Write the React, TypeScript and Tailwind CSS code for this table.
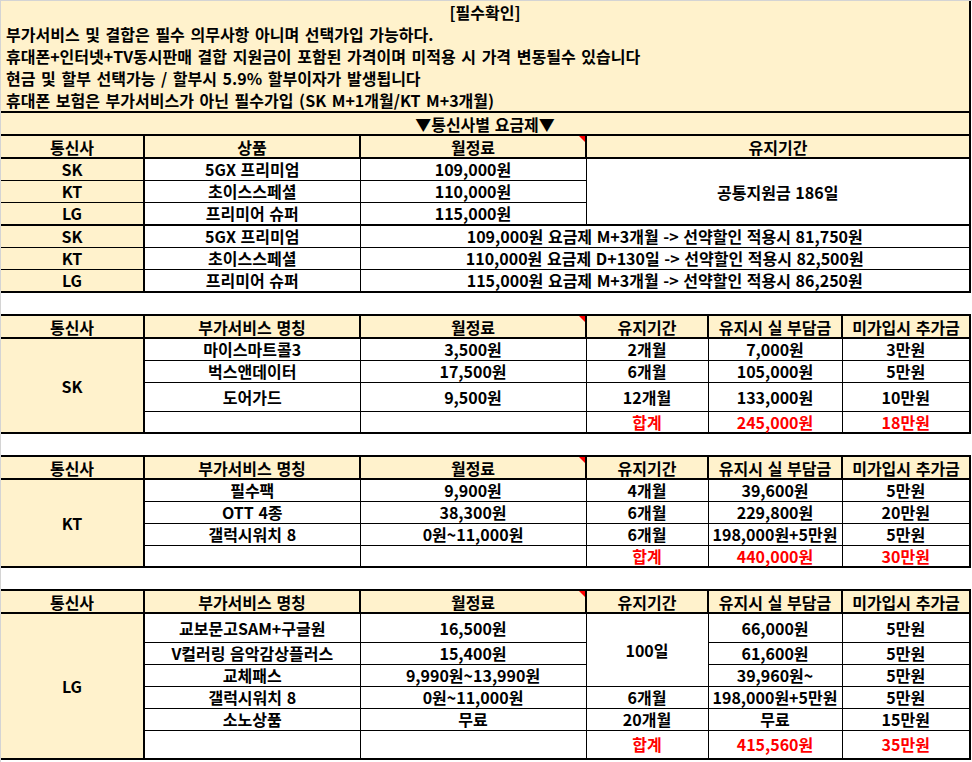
import React from "react";

const FONT = { fontFamily: '"Noto Sans CJK KR", "Noto Sans", sans-serif' };

const HEAD = "relative border-2 border-black bg-[#fff2cc] p-0 text-center font-bold";
const CELL = "border border-black p-0 text-center font-bold";
const CARRIER = "border border-r-2 border-l-0 border-black bg-[#fff2cc] p-0 text-center font-bold";

function Corner() {
  return (
    <span className="absolute right-0 top-0 h-0 w-0 border-l-[6px] border-t-[6px] border-l-transparent border-t-[#ff0000]" />
  );
}

function Cols() {
  return (
    <colgroup>
      <col className="w-[143px]" />
      <col className="w-[216px]" />
      <col className="w-[226px]" />
      <col className="w-[122px]" />
      <col className="w-[134px]" />
      <col className="w-[128px]" />
    </colgroup>
  );
}

type Row = {
  name: string;
  fee: string;
  period: string | null;
  span?: number;
  real: string;
  extra: string;
  h: string;
};

type Addon = {
  carrier: string;
  rows: Row[];
  total: { real: string; extra: string; h: string };
};

const ADDONS: Addon[] = [
  {
    carrier: "SK",
    rows: [
      { name: "마이스마트콜3", fee: "3,500원", period: "2개월", real: "7,000원", extra: "3만원", h: "h-[22px]" },
      { name: "벅스앤데이터", fee: "17,500원", period: "6개월", real: "105,000원", extra: "5만원", h: "h-[22px]" },
      { name: "도어가드", fee: "9,500원", period: "12개월", real: "133,000원", extra: "10만원", h: "h-[29px]" },
    ],
    total: { real: "245,000원", extra: "18만원", h: "h-[22px]" },
  },
  {
    carrier: "KT",
    rows: [
      { name: "필수팩", fee: "9,900원", period: "4개월", real: "39,600원", extra: "5만원", h: "h-[22px]" },
      { name: "OTT 4종", fee: "38,300원", period: "6개월", real: "229,800원", extra: "20만원", h: "h-[22px]" },
      { name: "갤럭시워치 8", fee: "0원~11,000원", period: "6개월", real: "198,000원+5만원", extra: "5만원", h: "h-[22px]" },
    ],
    total: { real: "440,000원", extra: "30만원", h: "h-[22px]" },
  },
  {
    carrier: "LG",
    rows: [
      { name: "교보문고SAM+구글원", fee: "16,500원", period: "100일", span: 3, real: "66,000원", extra: "5만원", h: "h-[29px]" },
      { name: "V컬러링 음악감상플러스", fee: "15,400원", period: null, real: "61,600원", extra: "5만원", h: "h-[22px]" },
      { name: "교체패스", fee: "9,990원~13,990원", period: null, real: "39,960원~", extra: "5만원", h: "h-[22px]" },
      { name: "갤럭시워치 8", fee: "0원~11,000원", period: "6개월", real: "198,000원+5만원", extra: "5만원", h: "h-[22px]" },
      { name: "소노상품", fee: "무료", period: "20개월", real: "무료", extra: "15만원", h: "h-[22px]" },
    ],
    total: { real: "415,560원", extra: "35만원", h: "h-[29px]" },
  },
];

const PLANS = [
  { carrier: "SK", name: "5GX 프리미엄", fee: "109,000원" },
  { carrier: "KT", name: "초이스스페셜", fee: "110,000원" },
  { carrier: "LG", name: "프리미어 슈퍼", fee: "115,000원" },
];

const DISCOUNTS = [
  { carrier: "SK", name: "5GX 프리미엄", text: "109,000원 요금제 M+3개월 -> 선약할인 적용시 81,750원" },
  { carrier: "KT", name: "초이스스페셜", text: "110,000원 요금제 D+130일 -> 선약할인 적용시 82,500원" },
  { carrier: "LG", name: "프리미어 슈퍼", text: "115,000원 요금제 M+3개월 -> 선약할인 적용시 86,250원" },
];

const NOTICE = [
  "부가서비스 및 결합은 필수 의무사항 아니며 선택가입 가능하다.",
  "휴대폰+인터넷+TV동시판매 결합 지원금이 포함된 가격이며 미적용 시 가격 변동될수 있습니다",
  "현금 및 할부 선택가능 / 할부시 5.9% 할부이자가 발생됩니다",
  "휴대폰 보험은 부가서비스가 아닌 필수가입 (SK M+1개월/KT M+3개월)",
];

function PlanTable() {
  return (
    <table className="w-[969px] table-fixed border-collapse">
      <Cols />
      <tbody>
        <tr className="h-[110px]">
          <td colSpan={6} className="border-b-2 border-r-2 border-black bg-[#fff2cc] p-0 align-top font-bold">
            <div className="h-[22px] text-center leading-[22px]">[필수확인]</div>
            {NOTICE.map((line) => (
              <div key={line} className="h-[22px] whitespace-nowrap pl-[5px] leading-[22px] [word-spacing:2px]">
                {line}
              </div>
            ))}
          </td>
        </tr>
        <tr className="h-[23px]">
          <td colSpan={6} className="border-2 border-l-0 border-black bg-[#fff2cc] p-0 text-center font-bold">
            ▼통신사별 요금제▼
          </td>
        </tr>
        <tr className="h-[23px]">
          <td className={`${HEAD} border-l-0`}>통신사</td>
          <td className={HEAD}>상품</td>
          <td className={HEAD}>
            월정료
            <Corner />
          </td>
          <td colSpan={3} className={HEAD}>
            유지기간
          </td>
        </tr>
        {PLANS.map((p, i) => (
          <tr key={p.carrier} className={i === 2 ? "h-[23px]" : "h-[22px]"}>
            <td className={`${CARRIER} ${i === 2 ? "border-b-2" : ""}`}>{p.carrier}</td>
            <td className={`${CELL} ${i === 2 ? "border-b-2" : ""}`}>{p.name}</td>
            <td className={`${CELL} ${i === 2 ? "border-b-2" : ""}`}>{p.fee}</td>
            {i === 0 && (
              <td rowSpan={3} colSpan={3} className={`${CELL} border-b-2 border-r-2`}>
                공통지원금 186일
              </td>
            )}
          </tr>
        ))}
        {DISCOUNTS.map((d, i) => (
          <tr key={d.carrier + "d"} className={i === 2 ? "h-[23px]" : "h-[22px]"}>
            <td className={`${CARRIER} ${i === 2 ? "border-b-2" : ""}`}>{d.carrier}</td>
            <td className={`${CELL} ${i === 2 ? "border-b-2" : ""}`}>{d.name}</td>
            <td colSpan={4} className={`${CELL} border-r-2 whitespace-nowrap ${i === 2 ? "border-b-2" : ""}`}>
              {d.text}
            </td>
          </tr>
        ))}
      </tbody>
    </table>
  );
}

function AddonTable({ data }: { data: Addon }) {
  const n = data.rows.length + 1;
  return (
    <table className="mt-[21px] w-[969px] table-fixed border-collapse">
      <Cols />
      <tbody>
        <tr className="h-[23px]">
          <td className={`${HEAD} border-l-0`}>통신사</td>
          <td className={HEAD}>부가서비스 명칭</td>
          <td className={HEAD}>
            월정료
            <Corner />
          </td>
          <td className={HEAD}>유지기간</td>
          <td className={`${HEAD} whitespace-nowrap`}>유지시 실 부담금</td>
          <td className={`${HEAD} whitespace-nowrap`}>미가입시 추가금</td>
        </tr>
        {data.rows.map((r, i) => (
          <tr key={r.name + i} className={r.h}>
            {i === 0 && (
              <td rowSpan={n} className={`${CARRIER} border-b-2`}>
                {data.carrier}
              </td>
            )}
            <td className={`${CELL} whitespace-nowrap`}>{r.name}</td>
            <td className={`${CELL} whitespace-nowrap`}>{r.fee}</td>
            {r.period !== null && (
              <td rowSpan={r.span ?? 1} className={CELL}>
                {r.period}
              </td>
            )}
            <td className={`${CELL} whitespace-nowrap`}>{r.real}</td>
            <td className={`${CELL} border-r-2`}>{r.extra}</td>
          </tr>
        ))}
        <tr className={data.total.h}>
          <td className={`${CELL} border-b-2`} />
          <td className={`${CELL} border-b-2`} />
          <td className={`${CELL} border-b-2 text-[#ff0000]`}>합계</td>
          <td className={`${CELL} border-b-2 text-[#ff0000]`}>{data.total.real}</td>
          <td className={`${CELL} border-b-2 border-r-2 text-[#ff0000]`}>{data.total.extra}</td>
        </tr>
      </tbody>
    </table>
  );
}

export default function App() {
  return (
    <div
      className="h-[762px] w-[972px] overflow-hidden border-l border-t border-[#d4d4d4] bg-white text-[16px] leading-[20px] text-black [word-spacing:1px]"
      style={FONT}
    >
      <PlanTable />
      {ADDONS.map((a) => (
        <AddonTable key={a.carrier} data={a} />
      ))}
    </div>
  );
}
